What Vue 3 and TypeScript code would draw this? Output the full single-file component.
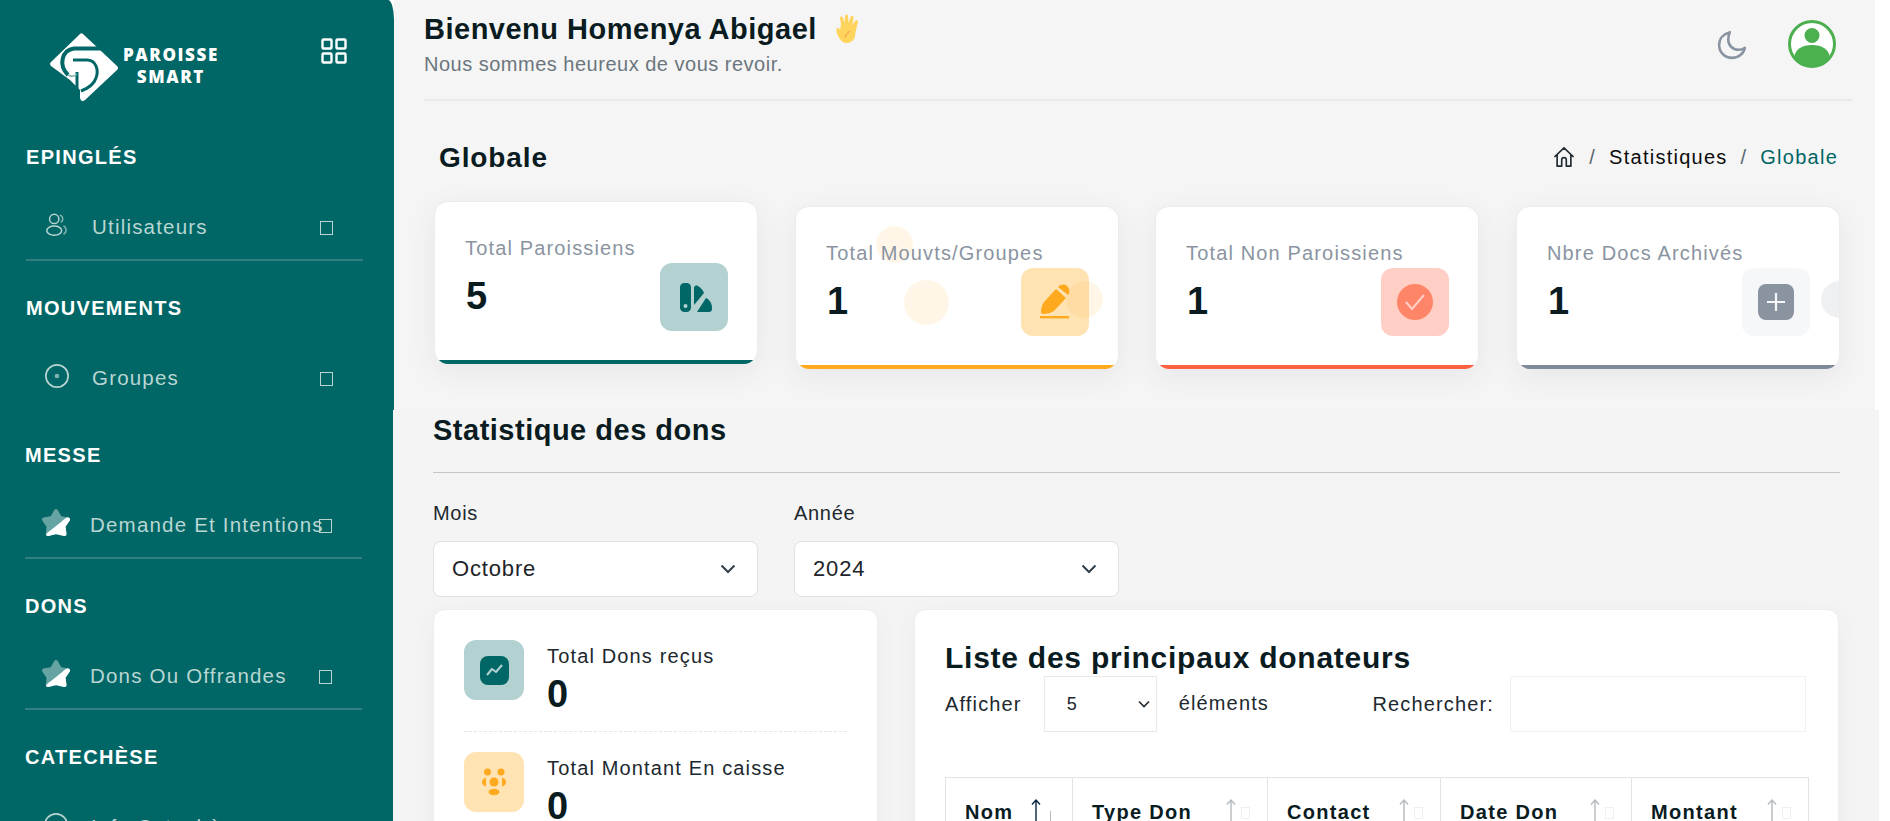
<script setup lang="ts">
interface NavItem {
  label: string;
  icon: string;
  line: boolean;
}

interface NavGroup {
  title: string;
  item: NavItem;
}

const topNav: NavGroup[] = [
  { title: "EPINGLÉS", item: { label: "Utilisateurs", icon: "users", line: true } },
  { title: "MOUVEMENTS", item: { label: "Groupes", icon: "disc", line: false } },
];

const lowerNav: NavGroup[] = [
  { title: "MESSE", item: { label: "Demande Et Intentions", icon: "star", line: true } },
  { title: "DONS", item: { label: "Dons Ou Offrandes", icon: "star", line: true } },
  { title: "CATECHÈSE", item: { label: "Info Catechèse", icon: "disc", line: false } },
];

const cards = [
  { label: "Total Paroissiens", value: 5, tone: "teal", lifted: true },
  { label: "Total Mouvts/Groupes", value: 1, tone: "orange", lifted: false },
  { label: "Total Non Paroissiens", value: 1, tone: "red", lifted: false },
  { label: "Nbre Docs Archivés", value: 1, tone: "gray", lifted: false },
];

const columns = [
  { name: "Nom", width: 127 },
  { name: "Type Don", width: 195 },
  { name: "Contact", width: 173 },
  { name: "Date Don", width: 191 },
  { name: "Montant", width: 177 },
];
</script>

<template>
  <div class="page">
    <!-- the capture is two scroll positions stacked, hence two rows -->
    <div class="row row-top">
      <aside class="side side-top">
        <div class="brand">
          <svg class="logo" viewBox="0 0 70 70">
            <path d="M34 2 L68 34 Q70 36 68 38 L36 68 Q32 71 31 66 L31 58 L21 48 L2 34 Q0 32 2 30 L30 3 Q32 0 34 2 Z" fill="#fff" />
            <path d="M52 16.500 H25 C13 18 9 33 19 43" fill="none" stroke="#006666" stroke-width="4" />
            <path d="M24 28 H38 C47 28 50 38 47 46 C45 52 40 56 32 59" fill="none" stroke="#006666" stroke-width="3" />
            <path d="M28 40 V66" fill="none" stroke="#006666" stroke-width="3" />
            <path d="M19 43 Q24 46 28 42" fill="none" stroke="#7fb2b2" stroke-width="1.500" />
          </svg>
          <div class="brand-name">
            <span>PAROISSE</span>
            <span>SMART</span>
          </div>
          <svg class="grid-icon" viewBox="0 0 26 26" fill="none" stroke="#fff" stroke-width="2.400">
            <rect x="1.500" y="1.500" width="9" height="9" rx="1" />
            <rect x="15.500" y="1.500" width="9" height="9" rx="1" />
            <rect x="1.500" y="15.500" width="9" height="9" rx="1" />
            <rect x="15.500" y="15.500" width="9" height="9" rx="1" />
          </svg>
        </div>
        <section v-for="group in topNav" :key="group.title" class="nav-group">
          <h4 class="nav-title">{{ group.title }}</h4>
          <div class="nav-item" :class="{ lined: group.item.line }">
            <svg v-if="group.item.icon === 'users'" class="nav-icon" viewBox="0 0 28 28" fill="none" stroke="#b9d6d3" stroke-width="1.600">
              <circle cx="11" cy="7.500" r="5" />
              <ellipse cx="11" cy="20" rx="8" ry="5" />
              <path d="M17 3.500 A4 4 0 0 1 18 11" stroke="#7fb2b0" />
              <path d="M21 15 A5 5 0 0 1 21 24" stroke="#7fb2b0" />
            </svg>
            <svg v-else class="nav-icon" viewBox="0 0 28 28" fill="none" stroke="#b9d6d3" stroke-width="1.800">
              <circle cx="14" cy="14" r="12" />
              <circle cx="14" cy="14" r="2.500" fill="#7fb2b0" stroke="none" />
            </svg>
            <span class="nav-label">{{ group.item.label }}</span>
            <i class="tofu"></i>
          </div>
        </section>
      </aside>

      <main class="main-top">
        <header class="topbar">
          <div class="hello">
            <h1>
              Bienvenu Homenya Abigael
              <svg class="wave" viewBox="0 0 26 30">
                <path d="M8 28 C4 25 1 19 1.500 15 C2 13 4 13.500 5 16 L6 10 L5 4 C5 2 7.500 2 8 4 L9.500 9 L10 2 C10 0 13 0 13 2 L13.500 9 L15.500 3 C16 1 18.500 1.500 18.500 3.500 L17.500 11 L20 7 C21 5.500 23.500 6.500 23 8.500 C21.500 13 20.500 18 20 22 C19.500 27 13 31 8 28 Z" fill="#ffd45c" />
                <path d="M10 24 Q11 19 15 17" fill="none" stroke="#f2994a" stroke-width="1" />
              </svg>
            </h1>
            <p>Nous sommes heureux de vous revoir.</p>
          </div>
          <div class="top-actions">
            <svg class="moon" viewBox="0 0 28 28" fill="none" stroke="#8a94a1" stroke-width="2.400" stroke-linejoin="round">
              <path d="M12 2 C6 3.500 2 8 2 14 C2 21 7.500 26 14 26 C20 26 25 22 26 16.500 C24 18 22 18.500 20 18.500 C14.500 18.500 10.500 14 10.500 9 C10.500 6.500 11 4 12 2 Z" />
            </svg>
            <svg class="avatar" viewBox="0 0 48 48">
              <circle cx="24" cy="24" r="24" fill="#fff" />
              <circle cx="24" cy="24" r="22.500" fill="#fff" stroke="#4caf50" stroke-width="3" />
              <circle cx="24" cy="15.500" r="7.500" fill="#4caf50" />
              <path d="M6 38 C7 29 14 25 24 25 C34 25 41 29 42 38 C37 43 31 46.500 24 46.500 C17 46.500 11 43 6 38 Z" fill="#4caf50" />
            </svg>
          </div>
        </header>

        <div class="crumbs-row">
          <h2>Globale</h2>
          <nav class="crumbs">
            <svg class="home" viewBox="0 0 24 24" fill="none" stroke="#1f2a33" stroke-width="1.800" stroke-linejoin="round">
              <path d="M1.500 12 L12 2 L22.500 12 M4.500 9.500 V22 H9.500 V15 C9.500 12 14.500 12 14.500 15 V22 H19.500 V9.500" />
            </svg>
            <span class="sep">/</span>
            <span>Statistiques</span>
            <span class="sep">/</span>
            <span class="current">Globale</span>
          </nav>
        </div>

        <div class="cards">
          <article v-for="card in cards" :key="card.label" class="card" :class="[card.tone, { lifted: card.lifted }]">
            <i v-if="card.tone === 'orange'" class="blob blob-a"></i>
            <i v-if="card.tone === 'orange'" class="blob blob-b"></i>
            <div class="card-label">{{ card.label }}</div>
            <div class="card-row">
              <strong>{{ card.value }}</strong>
              <div class="card-icon">
                <svg v-if="card.tone === 'teal'" viewBox="0 0 68 68" fill="#006666">
                  <rect x="20" y="20" width="11" height="29" rx="4.500" />
                  <circle cx="25.500" cy="43" r="2" fill="#b3d1d1" />
                  <path d="M34 25 C34 23 36 22 38 23 C41 25 43 27 44 30 L34 42 Z" />
                  <path d="M37 49 L46 35 C50 37 52 41 52 45 C52 48 51 49 49 49 Z" />
                </svg>
                <svg v-else-if="card.tone === 'orange'" viewBox="0 0 68 68" fill="#ffa91e">
                  <path d="M20 44 C20 40 21 37 23 34 L35 21 L45 30 L33 43 C30 45 26 46 22 46 C21 46 20 45 20 44 Z" />
                  <path d="M37 19 C40 16 44 16 46 18 C49 20 49 25 47 27 Z" />
                  <rect x="19" y="48" width="29" height="2.400" />
                </svg>
                <svg v-else-if="card.tone === 'red'" viewBox="0 0 68 68">
                  <circle cx="34" cy="34" r="18" fill="#ff8569" />
                  <path d="M25 34 L31 41 L43 27" fill="none" stroke="#ffcfc6" stroke-width="2" />
                </svg>
                <svg v-else viewBox="0 0 68 68">
                  <rect x="16" y="16" width="36" height="36" rx="8" fill="#8a93a0" />
                  <path d="M34 25 V43 M25 34 H43" stroke="#f6f7f9" stroke-width="2.200" />
                </svg>
              </div>
            </div>
            <i v-if="card.tone === 'orange'" class="blob blob-c"></i>
            <i v-if="card.tone === 'gray'" class="blob blob-d"></i>
          </article>
        </div>
      </main>
    </div>

    <div class="row row-low">
      <aside class="side side-low">
        <section v-for="group in lowerNav" :key="group.title" class="nav-group">
          <h4 class="nav-title">{{ group.title }}</h4>
          <div class="nav-item" :class="{ lined: group.item.line }">
            <svg v-if="group.item.icon === 'star'" class="nav-icon star" viewBox="0 0 30 30">
              <defs>
                <clipPath id="star-low"><path d="M0 30 L30 6 V30 Z" /></clipPath>
              </defs>
              <path d="M15 3 L19 10 L27 11.500 L22.500 18 L23.500 26 L15 24 L7 26 L7.500 18 L3 11.500 L11 10 Z" fill="#66a3a3" stroke="#66a3a3" stroke-width="4" stroke-linejoin="round" />
              <path d="M15 3 L19 10 L27 11.500 L22.500 18 L23.500 26 L15 24 L7 26 L7.500 18 L3 11.500 L11 10 Z" fill="#fff" stroke="#fff" stroke-width="4" stroke-linejoin="round" clip-path="url(#star-low)" />
            </svg>
            <svg v-else class="nav-icon" viewBox="0 0 28 28" fill="none" stroke="#b9d6d3" stroke-width="1.800">
              <circle cx="14" cy="14" r="12" />
            </svg>
            <span class="nav-label">{{ group.item.label }}</span>
            <i v-if="group.item.line" class="tofu"></i>
          </div>
        </section>
      </aside>

      <main class="main-low">
        <h3 class="stats-title">Statistique des dons</h3>
        <div class="filters">
          <label class="filter">
            <span>Mois</span>
            <div class="fake-select">
              Octobre
              <svg viewBox="0 0 16 10" fill="none" stroke="#33404a" stroke-width="2"><path d="M1.500 1.500 L8 8 L14.500 1.500" /></svg>
            </div>
          </label>
          <label class="filter">
            <span>Année</span>
            <div class="fake-select">
              2024
              <svg viewBox="0 0 16 10" fill="none" stroke="#33404a" stroke-width="2"><path d="M1.500 1.500 L8 8 L14.500 1.500" /></svg>
            </div>
          </label>
        </div>

        <div class="panels">
          <section class="panel totals">
            <div class="total">
              <div class="total-icon teal-soft">
                <svg viewBox="0 0 60 60">
                  <rect x="16" y="16" width="29" height="29" rx="8" fill="#006666" />
                  <path d="M23 35 L28 29 L32 32 L38 25" fill="none" stroke="#b3d1d1" stroke-width="2" stroke-linejoin="round" />
                </svg>
              </div>
              <div>
                <div class="total-label">Total Dons reçus</div>
                <strong>0</strong>
              </div>
            </div>
            <div class="total">
              <div class="total-icon orange-soft">
                <svg viewBox="0 0 60 60" fill="#ffa91e">
                  <circle cx="23.500" cy="20" r="3.500" />
                  <circle cx="37" cy="20" r="3.500" />
                  <circle cx="30" cy="30" r="4.500" />
                  <path d="M22 25.500 C19 26.500 18 28.500 18 30 C18 32 19.500 33.500 22 34.500 Z" />
                  <path d="M38 25.500 C41 26.500 42 28.500 42 30 C42 32 40.500 33.500 38 34.500 Z" />
                  <ellipse cx="30" cy="40" rx="5.500" ry="3.200" />
                </svg>
              </div>
              <div>
                <div class="total-label">Total Montant En caisse</div>
                <strong>0</strong>
              </div>
            </div>
          </section>

          <section class="panel donors">
            <h3>Liste des principaux donateurs</h3>
            <div class="table-tools">
              <span>Afficher</span>
              <div class="page-size">
                5
                <svg viewBox="0 0 12 8" fill="none" stroke="#1f2a33" stroke-width="1.600"><path d="M1 1.500 L6 6.500 L11 1.500" /></svg>
              </div>
              <span class="tools-after">éléments</span>
              <span class="search-label">Rechercher:</span>
              <div class="search-box"></div>
            </div>
            <table>
              <thead>
                <tr>
                  <th v-for="(col, i) in columns" :key="col.name" :style="{ width: col.width + 'px' }">
                    <div class="th-inner">
                      <span>{{ col.name }}</span>
                      <span class="sort" :class="{ active: i === 0 }">
                        <svg viewBox="0 0 12 34" fill="none" stroke-width="1.400"><path d="M6 33 V2 M2 6.500 L6 2 L10 6.500" /></svg>
                        <i v-if="i > 0" class="sort-tofu"></i>
                        <i v-else class="sort-down"></i>
                      </span>
                    </div>
                  </th>
                </tr>
              </thead>
            </table>
          </section>
        </div>
      </main>
    </div>
  </div>
</template>

<style scoped>
.page {
  width: 1890px;
  height: 821px;
  overflow: hidden;
  background: #fff;
  font-family: "Liberation Sans", Arial, sans-serif;
  letter-spacing: 1.150px;
  color: #0a1c1f;
}

.row {
  display: flex;
  overflow: hidden;
}

.row-top {
  height: 410px;
}

.row-low {
  height: 411px;
}

/* sidebar */
.side {
  flex: none;
  background: #006666;
  color: #fff;
  padding-left: 26px;
  padding-right: 31px;
  box-sizing: border-box;
}

.side-top {
  width: 394px;
  border-radius: 0 6px 0 0 / 0 20px 0 0;
}

.side-low {
  width: 393px;
  padding-left: 25px;
  padding-top: 33px;
}

.brand {
  height: 145px;
  display: flex;
  align-items: flex-start;
  position: relative;
}

.logo {
  width: 70px;
  height: 70px;
  margin: 32px 0 0 23px;
}

.brand-name {
  display: flex;
  flex-direction: column;
  align-items: center;
  margin: 44px 0 0 4px;
  font-family: "Open Sans", sans-serif;
  font-weight: 800;
  font-size: 17px;
  line-height: 21.500px;
  letter-spacing: 1.600px;
}

.grid-icon {
  position: absolute;
  left: 295px;
  top: 38px;
  width: 26px;
  height: 26px;
}

.nav-group {
  margin-bottom: 35px;
}

.nav-title {
  margin: 0;
  font-size: 20px;
  line-height: 24px;
  font-weight: 700;
  letter-spacing: 1.300px;
}

.nav-item {
  height: 66px;
  margin-top: 26px;
  display: flex;
  align-items: center;
  position: relative;
  color: #b9d6d3;
  box-sizing: border-box;
  padding-bottom: 2px;
}

.nav-item.lined {
  border-bottom: 2px solid #337f80;
  padding-bottom: 0;
}

.nav-icon {
  width: 26px;
  height: 26px;
  margin: 0 0 4px 18px;
  flex: none;
}

.star {
  width: 30px;
  height: 30px;
  margin-left: 16px;
  margin-right: -3px;
}

.nav-label {
  margin-left: 22px;
  font-size: 20.500px;
  white-space: nowrap;
  letter-spacing: 1.200px;
}

.tofu {
  position: absolute;
  left: 294px;
  top: 26px;
  width: 11px;
  height: 12px;
  border: 1px solid #b9d6d3;
}

/* top area */
.main-top {
  width: 1481px;
  flex: none;
  background: #f5f5f5;
  padding: 0 23px 0 30px;
  box-sizing: border-box;
}

.topbar {
  height: 99px;
  border-bottom: 2px solid #e6eaed;
  display: flex;
  justify-content: space-between;
  box-sizing: content-box;
}

.hello h1 {
  margin: 12px 0 0;
  font-size: 29px;
  line-height: 34px;
  font-weight: 700;
  letter-spacing: 0.500px;
  display: flex;
  align-items: center;
}

.wave {
  width: 26px;
  height: 30px;
  margin-left: 18px;
}

.hello p {
  margin: 6px 0 0;
  font-size: 20px;
  line-height: 24px;
  color: #6c757d;
  letter-spacing: 0.500px;
}

.top-actions {
  display: flex;
  align-items: flex-start;
  margin-right: 16px;
}

.moon {
  width: 30px;
  height: 30px;
  margin-top: 30px;
}

.avatar {
  width: 48px;
  height: 48px;
  margin: 20px 0 0 41px;
}

.crumbs-row {
  height: 56px;
  padding: 0 14px 0 15px;
  margin-top: 28px;
  display: flex;
  justify-content: space-between;
  align-items: center;
}

.crumbs-row h2 {
  margin: 1px 0 0;
  font-size: 28px;
  font-weight: 700;
  letter-spacing: 0.900px;
}

.crumbs {
  display: flex;
  align-items: center;
  font-size: 20px;
  letter-spacing: 1.250px;
  color: #0c0c0c;
  gap: 13px;
}

.home {
  width: 24px;
  height: 22px;
}

.sep {
  color: #5a6570;
}

.current {
  color: #006666;
}

.cards {
  margin-top: 21px;
  margin-left: 10px;
  display: flex;
  gap: 37px;
}

.card {
  flex: none;
  width: 324px;
  height: 163px;
  padding: 33px 29px 0 30px;
  background: #fff;
  border: 1px solid #ececec;
  border-bottom: 0;
  border-radius: 14px;
  box-sizing: border-box;
  position: relative;
  overflow: hidden;
  box-shadow: 0 8px 30px rgba(60, 70, 100, 0.08);
}

.card::after {
  content: "";
  position: absolute;
  left: 0;
  right: 0;
  bottom: 0;
  height: 4px;
  background: currentColor;
}

.card:nth-child(2) {
  margin-right: -1px;
}

.card.lifted {
  transform: translateY(-5px);
}

.card.teal { color: #006666; }
.card.orange { color: #ffa91e; }
.card.red { color: #ff6242; }
.card.gray { color: #7e8a98; }

.card-label {
  font-size: 20px;
  line-height: 26px;
  color: #8a94a1;
  position: relative;
}

.card-row {
  margin-top: 2px;
  display: flex;
  justify-content: space-between;
  align-items: center;
  position: relative;
}

.card-row strong {
  font-size: 38px;
  line-height: 64px;
  margin: 0 0 2px 1px;
  letter-spacing: 0;
  color: #0a1c1f;
}

.card-icon {
  width: 68px;
  height: 68px;
  border-radius: 12px;
}

.card-icon svg {
  display: block;
  width: 68px;
  height: 68px;
}

.teal .card-icon { background: #b3d1d1; }
.orange .card-icon { background: #ffe3b3; }
.red .card-icon { background: #ffcfc6; }
.gray .card-icon { background: #f6f7f9; }

.blob {
  position: absolute;
  border-radius: 50%;
  background: rgba(255, 169, 30, 0.1);
}

.blob-a {
  left: 80px;
  top: 19px;
  width: 37px;
  height: 37px;
}

.blob-b {
  left: 108px;
  top: 73px;
  width: 45px;
  height: 45px;
}

.blob-c {
  left: 270px;
  top: 74px;
  width: 37px;
  height: 37px;
}

.blob-d {
  left: 304px;
  top: 74px;
  width: 37px;
  height: 37px;
  background: rgba(130, 140, 155, 0.13);
}

/* lower area */
.main-low {
  width: 1486px;
  flex: none;
  background: #f4f4f4;
  padding-left: 40px;
  box-sizing: border-box;
}

.stats-title {
  margin: 0;
  width: 1407px;
  height: 59px;
  padding-top: 3px;
  box-sizing: content-box;
  font-size: 29px;
  line-height: 34px;
  font-weight: 700;
  letter-spacing: 0.500px;
  border-bottom: 1px solid #c3c7c7;
}

.filters {
  display: flex;
  gap: 36px;
  margin-top: 29px;
}

.filter {
  display: block;
  width: 325px;
}

.filter span {
  display: block;
  font-size: 20px;
  line-height: 22px;
  color: #20282e;
  letter-spacing: 0.700px;
}

.fake-select {
  margin-top: 17px;
  height: 56px;
  padding: 0 21px 0 18px;
  display: flex;
  align-items: center;
  justify-content: space-between;
  background: #fff;
  border: 1px solid #dee2e6;
  border-radius: 8px;
  box-sizing: border-box;
  font-size: 22px;
  letter-spacing: 0.850px;
  color: #212529;
}

.fake-select svg {
  width: 16px;
  height: 10px;
}

.panels {
  display: flex;
  gap: 36px;
  margin-top: 12px;
}

.panel {
  background: #fff;
  border: 1px solid #eee;
  border-radius: 12px;
  box-sizing: border-box;
  height: 260px;
  box-shadow: 0 6px 24px rgba(60, 70, 100, 0.05);
}

.totals {
  width: 445px;
  flex: none;
  padding: 30px 30px 0;
}

.total {
  display: flex;
  gap: 23px;
  height: 91px;
  border-bottom: 1px dashed #e3e6e8;
  margin-bottom: 20px;
}

.total-icon {
  width: 60px;
  height: 60px;
  border-radius: 12px;
  flex: none;
}

.total-icon svg {
  display: block;
}

.teal-soft { background: #b3d1d1; }
.orange-soft { background: #ffe3b3; }

.total-label {
  margin-top: 5px;
  font-size: 20px;
  line-height: 22px;
  color: #20282e;
}

.total strong {
  display: block;
  margin-top: 5px;
  font-size: 38px;
  line-height: 44px;
  letter-spacing: 0;
}

.donors {
  width: 925px;
  flex: none;
  padding: 30px 32px 0 30px;
}

.donors h3 {
  margin: 0;
  font-size: 30px;
  line-height: 36px;
  font-weight: 700;
  letter-spacing: 0.750px;
}

.table-tools {
  display: flex;
  align-items: center;
  margin-top: 0;
  height: 56px;
  font-size: 20px;
  color: #20282e;
}

.page-size {
  margin-left: 22px;
  width: 113px;
  height: 56px;
  border: 1px solid #e7e9ec;
  box-sizing: border-box;
  padding: 0 6px 0 22px;
  display: flex;
  align-items: center;
  justify-content: space-between;
  font-size: 18px;
}

.page-size svg {
  width: 12px;
  height: 8px;
}

.tools-after {
  margin-left: 22px;
  position: relative;
  top: -1px;
}

.search-label {
  margin-left: auto;
}

.search-box {
  margin-left: 16px;
  width: 296px;
  height: 56px;
  border: 1px solid #eeeff1;
  box-sizing: border-box;
}

table {
  margin-top: 45px;
  border-collapse: collapse;
  table-layout: fixed;
  width: 863px;
}

th {
  border: 1px solid #e1e3e5;
  height: 70px;
  padding: 0 0 0 19px;
  text-align: left;
  font-size: 20px;
  letter-spacing: 1.300px;
  font-weight: 700;
  box-sizing: border-box;
  vertical-align: top;
}

.th-inner {
  height: 70px;
  display: flex;
  align-items: flex-start;
  justify-content: space-between;
  padding-top: 23px;
  box-sizing: border-box;
  position: relative;
}

.sort {
  position: relative;
  width: 42px;
  flex: none;
  color: #a8aeb3;
}

.sort svg {
  position: absolute;
  left: 0;
  top: -3px;
  width: 12px;
  height: 34px;
  stroke: #b5babd;
}

.sort.active svg {
  stroke: #0a2540;
}

.sort-tofu {
  position: absolute;
  left: 16px;
  top: 6px;
  width: 7px;
  height: 10px;
  border: 1px solid #eef0f1;
}

.sort-down {
  position: absolute;
  left: 20px;
  top: 10px;
  width: 1px;
  height: 30px;
  background: #b5babd;
}
</style>

<style>
html,
body {
  margin: 0;
  background: #fff;
}
</style>
